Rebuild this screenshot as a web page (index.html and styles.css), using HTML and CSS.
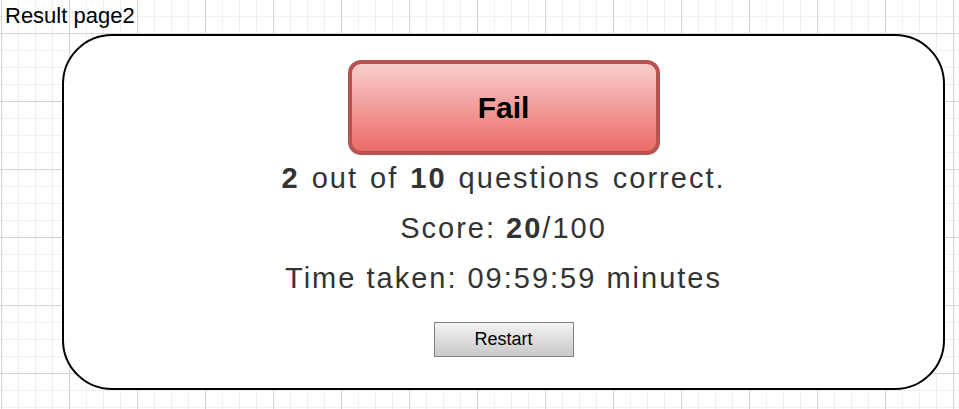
FILE: index.html
```html
<!DOCTYPE html>
<html>
<head>
<meta charset="utf-8">
<link rel="stylesheet" href="styles.css">
</head>
<body>
<div class="title">Result page2</div>
<div class="card">
  <div class="badge">Fail</div>
  <div class="line line-wide"><b>2</b> out of <b>10</b> questions correct.</div>
  <div class="line">Score: <b>20</b>/100</div>
  <div class="line">Time taken: 09:59:59 minutes</div>
  <button class="restart">Restart</button>
</div>
</body>
</html>
```
FILE: styles.css
```css
html, body {
  margin: 0;
  padding: 0;
}
body {
  width: 959px;
  height: 409px;
  overflow: hidden;
  font-family: "Liberation Sans", Arial, sans-serif;
  background-color: #ffffff;
  background-image:
    linear-gradient(to right, #d4d4d4 1px, transparent 1px),
    linear-gradient(to bottom, #d4d4d4 1px, transparent 1px),
    linear-gradient(to right, #f0f0f0 1px, transparent 1px),
    linear-gradient(to bottom, #f0f0f0 1px, transparent 1px);
  background-size: 68px 68px, 68px 68px, 17px 17px, 17px 17px;
  background-position: 1px 0, 0 33px, 1px 0, 0 33px;
}
.title {
  padding-left: 5px;
  font-size: 22px;
  line-height: 32px;
  height: 32px;
  color: #000;
}
.card {
  margin: 2px 0 0 62px;
  width: 879px;
  height: 328px;
  border: 2px solid #000;
  border-radius: 50px;
  background: #fff;
  display: flex;
  flex-direction: column;
  align-items: center;
  padding-top: 24px;
}
.badge {
  width: 304px;
  height: 87px;
  border: 4px solid #b85450;
  border-radius: 13px;
  background: linear-gradient(to bottom, #f8cecc, #ea6b66);
  display: flex;
  align-items: center;
  justify-content: center;
  font-weight: bold;
  font-size: 30px;
  color: #000;
}
.line {
  margin-top: -2px;
  font-size: 29px;
  line-height: 50px;
  letter-spacing: 2px;
  color: #333;
}
.line + .line {
  margin-top: 0;
}
.line-wide {
  word-spacing: 2px;
}
.restart {
  margin-top: 19px;
  width: 140px;
  height: 35px;
  border: 1px solid #808080;
  background: linear-gradient(to bottom, #f3f3f3, #c9c9c9);
  font-family: "Liberation Sans", Arial, sans-serif;
  font-size: 18px;
  color: #000;
  padding: 0;
}
```
